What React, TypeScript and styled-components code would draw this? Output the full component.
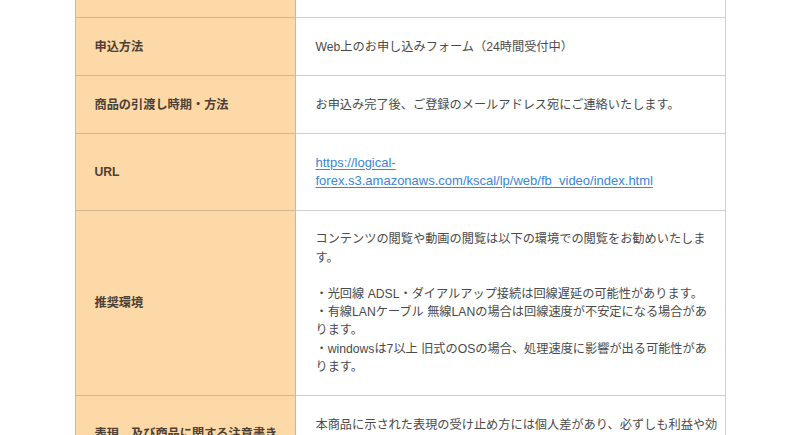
import React from "react";
import styled, { createGlobalStyle } from "styled-components";

const Global = createGlobalStyle`
  html, body { margin: 0; padding: 0; background: #fff; }
  body {
    font-family: "Liberation Sans", "Noto Sans CJK JP", sans-serif;
    font-size: 12.2px;
    color: #4a4a4a;
    overflow: hidden;
  }
`;

const Table = styled.div`
  width: 651px;
  margin: 0 auto;
  display: grid;
  grid-template-columns: 221px 1fr;
`;

const Head = styled.div<{ $h?: number }>`
  box-sizing: border-box;
  background: #fed9a8;
  border-left: 1px solid #d6b68e;
  border-right: 1px solid #d2b690;
  border-bottom: 1px solid #d2b690;
  padding: 19.5px 8px 19.5px 19px;
  display: flex;
  align-items: center;
  font-weight: bold;
  color: #4b4036;
  line-height: 18.2px;
  white-space: nowrap;
  ${(p) => (p.$h !== undefined ? `height: ${p.$h}px; padding: 0;` : "")}
`;

const Cell = styled.div<{ $h?: number }>`
  box-sizing: border-box;
  background: #fff;
  border-right: 1px solid #cfcfcf;
  border-bottom: 1px solid #cfcfcf;
  padding: 19.5px 4px 19.5px 20px;
  line-height: 18.2px;
  color: #4a4a4a;
  ${(p) => (p.$h !== undefined ? `height: ${p.$h}px; padding: 0;` : "")}
`;

const Link = styled.a`
  color: #3b86d6;
  font-size: 13px;
  text-decoration: underline;
  text-underline-offset: 2px;
  word-break: break-all;
`;

const Para = styled.p`
  margin: 0;
`;

const Line = styled.span`
  white-space: nowrap;
`;

export default function App() {
  return (
    <>
      <Global />
      <Table>
        <Head $h={18} />
        <Cell $h={18} />

        <Head>申込方法</Head>
        <Cell>Web上のお申し込みフォーム（24時間受付中）</Cell>

        <Head>商品の引渡し時期・方法</Head>
        <Cell>お申込み完了後、ご登録のメールアドレス宛にご連絡いたします。</Cell>

        <Head>URL</Head>
        <Cell>
          <Link href="#">
            https://logical-
            <br />
            forex.s3.amazonaws.com/kscal/lp/web/fb_video/index.html
          </Link>
        </Cell>

        <Head>推奨環境</Head>
        <Cell>
          <Para>
            <Line>コンテンツの閲覧や動画の閲覧は以下の環境での閲覧をお勧めいたしま</Line>
            <br />
            す。
          </Para>
          <br />
          <Para>・光回線 ADSL・ダイアルアップ接続は回線遅延の可能性があります。</Para>
          <Para>
            <Line>・有線LANケーブル 無線LANの場合は回線速度が不安定になる場合があ</Line>
            <br />
            ります。
          </Para>
          <Para>
            <Line>・windowsは7以上 旧式のOSの場合、処理速度に影響が出る可能性があ</Line>
            <br />
            ります。
          </Para>
        </Cell>

        <Head>表現、及び商品に関する注意書き</Head>
        <Cell>
          <Line>本商品に示された表現の受け止め方には個人差があり、必ずしも利益や効</Line>
          <br />
          果を保証したものではございません。
        </Cell>
      </Table>
    </>
  );
}
